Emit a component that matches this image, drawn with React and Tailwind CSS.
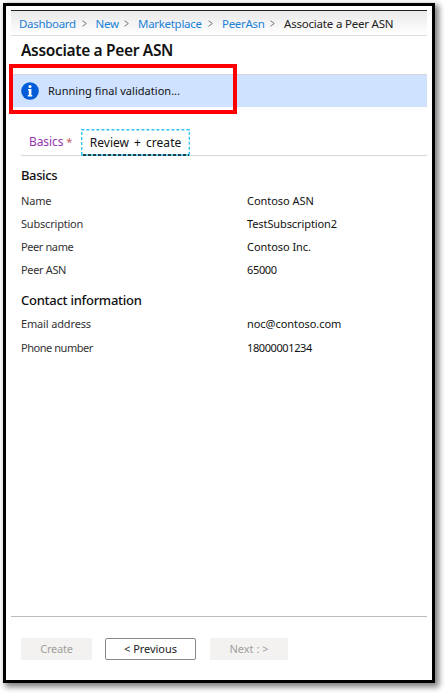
import React from "react";

const crumbs = [
  { label: "Dashboard", cls: "w-[76.5px]" },
  { label: "New", cls: "w-[42.5px]" },
  { label: "Marketplace", cls: "w-[84px]" },
  { label: "PeerAsn", cls: "w-[62px]" },
];

const basics = [
  ["Name", "Contoso ASN", "tracking-[-0.2px]", "tracking-[-0.05px]"],
  ["Subscription", "TestSubscription2", "tracking-[-0.2px]", "tracking-[-0.1px]"],
  ["Peer name", "Contoso Inc.", "tracking-[-0.4px]", "tracking-[-0.05px]"],
  ["Peer ASN", "65000", "tracking-[-0.35px]", "tracking-[-0.35px]"],
];

const contact = [
  ["Email address", "noc@contoso.com", "tracking-[-0.15px]", "tracking-[-0.05px]"],
  ["Phone number", "18000001234", "tracking-[-0.45px]", "tracking-[-0.4px]"],
];

function Row({ item, height = "h-[23px]" }) {
  const [label, value, labelCls, valueCls] = item;
  return (
    <div className={`flex items-center text-[11px] ${height}`}>
      <span className={`w-[226px] text-[#333] ${labelCls}`}>{label}</span>
      <span className={`text-[#111] ${valueCls}`}>{value}</span>
    </div>
  );
}

function Chevron() {
  return (
    <svg className="mr-[9px] h-[7px] w-[5px] shrink-0" viewBox="0 0 5 7" fill="none" stroke="#777" strokeWidth="1">
      <path d="M0.5 0.7 4.3 3.5 0.5 6.3" />
    </svg>
  );
}

export default function App() {
  return (
    <div className="h-[693px] w-[445px] overflow-hidden bg-white pl-[3px] pt-[3px] font-['Noto_Sans',sans-serif] whitespace-nowrap">
      <div className="relative flex h-[680px] w-[432px] flex-col border-[3px] border-black bg-white px-[5px] pt-[4px] shadow-[3px_3px_6px_1px_rgba(0,0,0,0.5)]">
        <nav className="flex h-[26px] items-center border-t border-b border-t-[#222] border-b-[#ddd] bg-linear-to-b from-[#e9e9e9] to-white pl-[8px] pt-px text-[11.5px]">
          {crumbs.map((c) => (
            <div key={c.label} className={`flex shrink-0 items-center justify-between ${c.cls}`}>
              <span className="tracking-[-0.3px] text-[#1b80d8]">{c.label}</span>
              <Chevron />
            </div>
          ))}
          <span className="tracking-[-0.2px] text-[#222]">Associate a Peer ASN</span>
        </nav>
        <h1 className="flex h-[38px] items-center pb-[8px] pl-[10px] text-[15.5px] tracking-[-0.33px] font-semibold text-[#111]">Associate a Peer ASN</h1>
        <div className="flex h-[33px] items-center border-t border-[#d5d5d5] bg-[#cfe2ff] pl-[10px]">
          <svg className="h-[18px] w-[18px]" viewBox="0 0 18 18">
            <circle cx="9" cy="9" r="8.8" fill="#015cda" />
            <circle cx="9" cy="4.6" r="1.5" fill="#fff" />
            <path d="M7 7h3.4v6h.8v1.4H6.8V13h1V8.4H7z" fill="#fff" />
          </svg>
          <span className="pl-[9px] pt-px text-[11px] tracking-[0.03px] text-[#111]">Running final validation...</span>
        </div>
        <div className="ml-[10px] mt-[22px] flex h-[27px] border-b border-[#d6d6d6] text-[12px]">
          <div className="flex w-[60px] items-center pl-[8px] text-[#9a35ad]">
            <span className="tracking-[-0.1px]">Basics</span>
            <span className="pl-[3px] text-[11px] text-[#c2616b]">*</span>
          </div>
          <div className="relative -mb-px flex h-[27px] w-[109px] items-center justify-center text-[#111]">
            <svg className="absolute inset-0 h-[27px] w-[109px]" viewBox="0 0 109 27" fill="none">
              <path d="M0.7 26V0.7H108.3V26" stroke="#2fc4f3" strokeWidth="1.4" strokeDasharray="3 2" />
              <path d="M0 26H109" stroke="#2fc4f3" strokeWidth="1.6" />
              <path d="M2 26H108" stroke="#111" strokeWidth="1.4" strokeDasharray="3 2" />
            </svg>
            <span className="tracking-[0.05px] [word-spacing:1.8px]">Review + create</span>
          </div>
        </div>
        <div className="flex flex-col pl-[10px] pt-[8px]">
          <h2 className="flex h-[24px] items-center text-[13px] tracking-[-0.4px] font-medium text-[#111]">Basics</h2>
          <div className="flex flex-col pt-[2px]">
            {basics.map((item) => <Row key={item[0]} item={item} />)}
          </div>
          <h2 className="mt-[7px] flex h-[24px] items-center text-[13px] tracking-[-0.26px] font-medium text-[#111]">Contact information</h2>
          <div className="-mt-px flex flex-col">
            {contact.map((item) => <Row key={item[0]} item={item} height="h-[24px]" />)}
          </div>
        </div>
        <footer className="mt-auto flex h-[64px] border-t border-[#bbb] pl-[10px] pt-[21px] text-[11px]">
          <button className="h-[22px] w-[71px] bg-[#f3f2f1] tracking-[-0.2px] text-[#a19f9d]">Create</button>
          <button className="ml-[13px] h-[22px] w-[91px] rounded-[2px] border border-[#888] bg-white tracking-[-0.05px] text-[#222]">&lt; Previous</button>
          <button className="ml-[14px] h-[22px] w-[78px] bg-[#f3f2f1] text-[#a19f9d]">Next : &gt;</button>
        </footer>
        <div className="absolute left-[3px] top-[58px] h-[50px] w-[228px] border-[4px] border-[#f00]" />
      </div>
    </div>
  );
}
